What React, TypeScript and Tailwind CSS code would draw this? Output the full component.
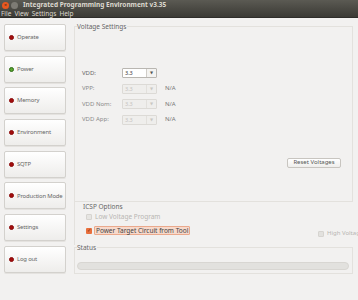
const navItems = [
  { label: "Operate", on: false },
  { label: "Power", on: true },
  { label: "Memory", on: false },
  { label: "Environment", on: false },
  { label: "SQTP", on: false },
  { label: "Production Mode", on: false },
  { label: "Settings", on: false },
  { label: "Log out", on: false },
];

const voltRows = [
  { label: "VDD:", value: "3.3", enabled: true },
  { label: "VPP:", value: "3.3", enabled: false },
  { label: "VDD Nom:", value: "3.3", enabled: false },
  { label: "VDD App:", value: "3.3", enabled: false },
];

function Select({ value, enabled }: { value: string; enabled: boolean }) {
  return (
    <div
      className={`flex h-[10px] w-[35px] items-stretch rounded-[1px] border ${
        enabled ? "border-[#b9b6b1] bg-white" : "border-[#dcdad6] bg-[#efeeec]"
      }`}
    >
      <span
        className={`flex-1 pl-[2px] text-[5.5px] leading-[9px] ${
          enabled ? "text-[#333]" : "text-[#c4c2be]"
        }`}
      >
        {value}
      </span>
      <span
        className={`flex w-[10px] items-center justify-center border-l text-[4px] ${
          enabled ? "border-[#d0cdc8] bg-[#f4f3f1] text-[#555]" : "border-[#e2e0dc] text-[#c9c7c3]"
        }`}
      >
        ▼
      </span>
    </div>
  );
}

export default function App() {
  return (
    <div
      className="h-[300px] w-[358px] overflow-hidden bg-[#f2f1f0] text-[7px] text-[#4c4c4c]"
      style={{ fontFamily: '"Noto Sans", "DejaVu Sans", sans-serif' }}
    >
      {/* Title + menu bar */}
      <div className="h-[18px] bg-gradient-to-b from-[#5b5a53] to-[#3b3a35] border-b border-[#2e2d2a]">
        <div className="flex h-[10px] items-center pl-[2px]">
          <span className="flex h-[7px] w-[7px] items-center justify-center rounded-full bg-[#e8581f] text-[5px] leading-none text-[#3b2a1f]">
            ×
          </span>
          <span className="ml-[2px] h-[7px] w-[7px] rounded-full bg-[#7d7b74]" />
          <span className="ml-[5px] text-[6.5px] font-bold text-[#dcd8cf]">
            Integrated Programming Environment v3.35
          </span>
        </div>
        <div className="flex h-[8px] items-center gap-[3px] pl-[1px] text-[6.5px] leading-none text-[#dcd8cf]">
          <span>File</span>
          <span>View</span>
          <span>Settings</span>
          <span>Help</span>
        </div>
      </div>

      <div className="flex">
        {/* Sidebar */}
        <div className="ml-[4px] mt-[6px] flex w-[62px] flex-col gap-[4.7px]">
          {navItems.map((item) => (
            <div
              key={item.label}
              className="flex h-[27px] items-center rounded-[2px] border border-[#d3d1cd] bg-gradient-to-b from-[#ffffff] to-[#eeedeb] pl-[4px] shadow-[0_1px_0_#e4e2df]"
            >
              <span
                className={`h-[5px] w-[5px] shrink-0 rounded-full border-[0.5px] ${
                  item.on ? "border-[#2e6b16] bg-[#58a52f]" : "border-[#8a0a0a] bg-[#a20d0d]"
                }`}
              />
              <span className="ml-[3px] whitespace-nowrap text-[5.9px] tracking-[-0.15px] text-[#666]">
                {item.label}
              </span>
            </div>
          ))}
        </div>

        {/* Main */}
        <div className="ml-[8px] mt-[8px] flex w-[279px] flex-col">
          {/* Voltage settings */}
          <div className="relative h-[176px] border border-[#e3e1dd]">
            <span className="absolute left-[2px] top-[-4px] bg-[#f2f1f0] pr-[1px] text-[6.5px] leading-[7px] text-[#666]">
              Voltage Settings
            </span>
            <div className="mt-[41px] ml-[7px] flex flex-col gap-[5.5px]">
              {voltRows.map((r) => (
                <div key={r.label} className="flex h-[10px] items-center">
                  <span
                    className={`w-[40px] text-[6px] ${r.enabled ? "text-[#666]" : "text-[#8a8a8a]"}`}
                  >
                    {r.label}
                  </span>
                  <Select value={r.value} enabled={r.enabled} />
                  {!r.enabled && <span className="ml-[8px] text-[6px] text-[#777]">N/A</span>}
                </div>
              ))}
            </div>
            <div className="mt-[33px] mr-[11px] flex justify-end">
              <div className="flex h-[10px] w-[54px] items-center justify-center rounded-[2px] border border-[#c8c5c0] bg-gradient-to-b from-white to-[#efeeec] text-[6px] text-[#555]">
                Reset Voltages
              </div>
            </div>
          </div>

          {/* ICSP options */}
          <div className="relative h-[43px] border-l border-[#e3e1dd]">
            <span className="absolute left-[8px] top-[0px] text-[6.5px] text-[#666]">ICSP Options</span>
            <div className="absolute left-[11px] top-[10px] flex items-center">
              <span className="h-[6px] w-[6px] rounded-[1px] border border-[#d6d4d0] bg-[#e6e5e2]" />
              <span className="ml-[3px] text-[6.5px] text-[#b8b6b2]">Low Voltage Program</span>
            </div>
            <div className="absolute left-[11px] top-[24px] flex items-center">
              <span className="flex h-[6px] w-[6px] items-center justify-center rounded-[1px] bg-[#e8703e] text-[5px] leading-none text-[#7a2c10]">
                ✓
              </span>
              <span className="ml-[2px] rounded-[1px] border border-[#eaa98c] bg-[#f7d9cb] px-[1px] text-[6.5px] leading-[7px] text-[#444]">
                Power Target Circuit from Tool
              </span>
            </div>
            <div className="absolute left-[243px] top-[27px] flex items-center">
              <span className="h-[6px] w-[6px] rounded-[1px] border border-[#d6d4d0] bg-[#e2e1de]" />
              <span className="ml-[3px] whitespace-nowrap text-[6px] text-[#b8b6b2]">High Voltage</span>
            </div>
          </div>

          {/* Status */}
          <div className="relative mt-[2px] h-[27px] w-[279px] border border-[#e3e1dd]">
            <span className="absolute left-[2px] top-[-4px] bg-[#f2f1f0] pr-[1px] text-[6.5px] leading-[7px] text-[#666]">
              Status
            </span>
            <div className="ml-[2px] mt-[14px] h-[8px] w-[272px] rounded-full border border-[#d8d6d2] bg-[#e2e1de]" />
          </div>
        </div>
      </div>
    </div>
  );
}
